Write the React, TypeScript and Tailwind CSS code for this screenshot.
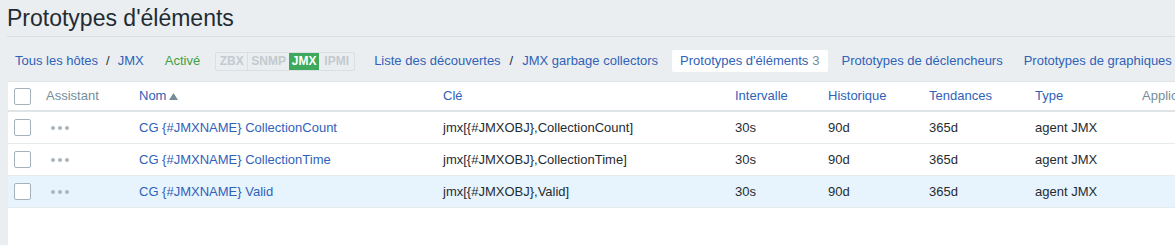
const rows = [
  { name: "CG {#JMXNAME} CollectionCount", key: "jmx[{#JMXOBJ},CollectionCount]" },
  { name: "CG {#JMXNAME} CollectionTime", key: "jmx[{#JMXOBJ},CollectionTime]" },
  { name: "CG {#JMXNAME} Valid", key: "jmx[{#JMXOBJ},Valid]", hover: true },
];

function Box() {
  return <div className="w-[17px] h-[17px] rounded-[2px] border border-[#a6b2ba] bg-white" />;
}

function Tags() {
  return (
    <div className="flex h-[19px] border border-[#d9dfe3] rounded-[2px] text-[12px] leading-[17px] font-bold text-center">
      <span className="w-[32px] text-[#c2cace] border-r border-[#d9dfe3]">ZBX</span>
      <span className="w-[41px] text-[#c2cace]">SNMP</span>
      <span className="w-[30px] bg-[#3ea95d] text-white">JMX</span>
      <span className="w-[35px] text-[#c2cace]">IPMI</span>
    </div>
  );
}

function Dots() {
  return (
    <div className="flex gap-[3px]">
      <span className="w-[4px] h-[4px] rounded-full bg-[#a9b6bd]" />
      <span className="w-[4px] h-[4px] rounded-full bg-[#a9b6bd]" />
      <span className="w-[4px] h-[4px] rounded-full bg-[#a9b6bd]" />
    </div>
  );
}

export default function App() {
  return (
    <div className="w-[1175px] h-[245px] overflow-hidden bg-[#ebeef0] text-[13px] text-[#1f2c33] font-['Liberation_Sans',Arial,sans-serif]">
      <div className="pl-[7px] pt-[3px]">
        <h1 className="text-[23px] leading-[30px] text-[#1f2c33]">Prototypes d'éléments</h1>
        <div className="mt-[3px] h-px bg-[#d9dfe3]" />
      </div>
      <div className="flex items-center h-[22px] mt-[13px] whitespace-nowrap text-[#2f62b8]">
        <a className="ml-[15px] shrink-0">Tous les hôtes</a>
        <span className="mx-[8px] text-[#1f2c33]">/</span>
        <a className="shrink-0">JMX</a>
        <span className="ml-[21px] shrink-0 text-[#429e47]">Activé</span>
        <div className="ml-[15px] shrink-0">
          <Tags />
        </div>
        <a className="ml-[19px] shrink-0">Liste des découvertes</a>
        <span className="mx-[9px] text-[#1f2c33]">/</span>
        <a className="shrink-0">JMX garbage collectors</a>
        <div className="ml-[14px] shrink-0 h-[22px] px-[8px] bg-white rounded-[2px] flex items-center">
          Prototypes d'éléments <span className="ml-[4px] text-[#768d99]">3</span>
        </div>
        <a className="ml-[14px] shrink-0">Prototypes de déclencheurs</a>
        <a className="ml-[21px] shrink-0">Prototypes de graphiques</a>
      </div>
      <div className="mt-[9px] ml-[8px] h-[165px] bg-white border-t border-[#dfe4e7] overflow-hidden">
        <div className="flex items-center h-[30px] border-b-2 border-[#dfe4e7] text-[#2f62b8] whitespace-nowrap">
          <div className="w-[38px] shrink-0 pl-[6px]"><Box /></div>
          <div className="w-[93px] shrink-0 text-[#768d99]">Assistant</div>
          <div className="w-[304px] shrink-0 flex items-center gap-[3px]">
            Nom
            <svg width="9" height="7" viewBox="0 0 9 7"><path d="M4.5 0L9 7H0z" fill="#768d99" /></svg>
          </div>
          <div className="w-[292px] shrink-0">Clé</div>
          <div className="w-[93px] shrink-0">Intervalle</div>
          <div className="w-[101px] shrink-0">Historique</div>
          <div className="w-[106px] shrink-0">Tendances</div>
          <div className="w-[107px] shrink-0">Type</div>
          <div className="shrink-0 text-[#768d99]">Applications</div>
        </div>
        {rows.map((r) => (
          <div
            key={r.name}
            className={`flex items-center h-[32px] border-b border-[#e6ebed] whitespace-nowrap ${r.hover ? "bg-[#e8f4fd]" : ""}`}
          >
            <div className="w-[38px] shrink-0 pl-[6px]"><Box /></div>
            <div className="w-[93px] shrink-0 pl-[5px]"><Dots /></div>
            <div className="w-[304px] shrink-0 text-[#2f62b8]">{r.name}</div>
            <div className="w-[292px] shrink-0">{r.key}</div>
            <div className="w-[93px] shrink-0">30s</div>
            <div className="w-[101px] shrink-0">90d</div>
            <div className="w-[106px] shrink-0">365d</div>
            <div className="w-[107px] shrink-0">agent JMX</div>
          </div>
        ))}
      </div>
    </div>
  );
}
